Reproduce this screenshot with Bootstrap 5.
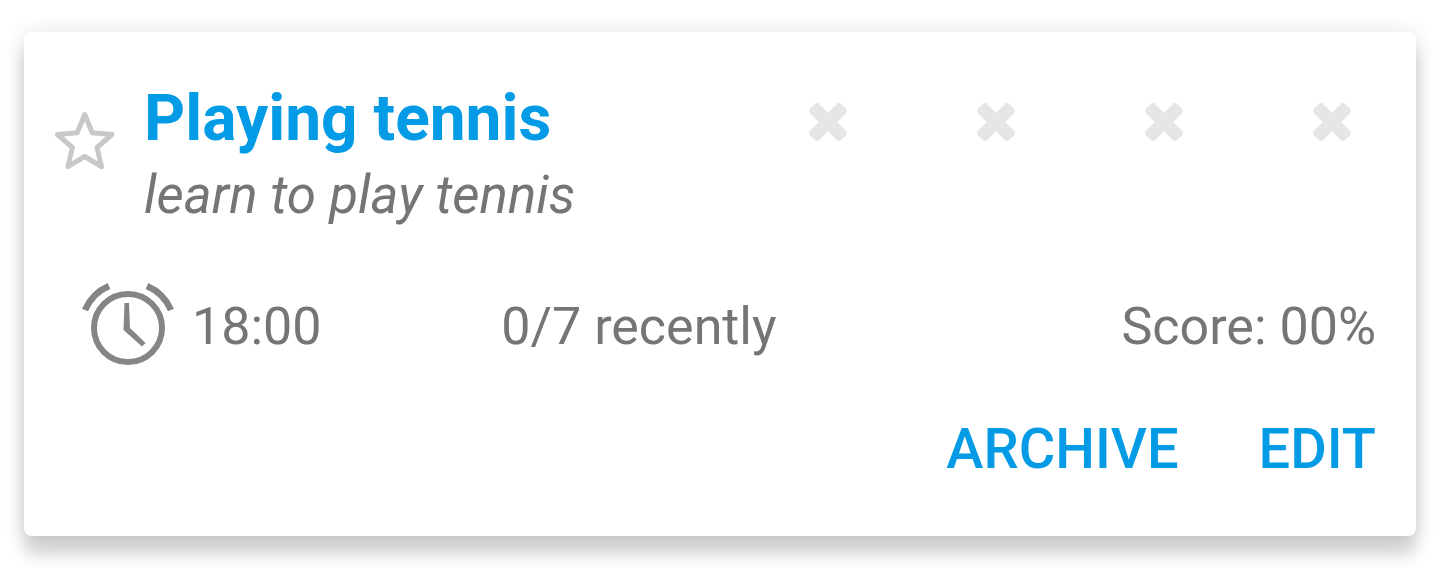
<!DOCTYPE html>
<html lang="en">
<head>
<meta charset="utf-8">
<meta name="viewport" content="width=device-width, initial-scale=1">
<title>Habits</title>
<link href="https://cdn.jsdelivr.net/npm/bootstrap@5.3.0/dist/css/bootstrap.min.css" rel="stylesheet">
<style>
  body { font-family: Roboto, "Liberation Sans", sans-serif; background: #fff; color: #757575; }
  .habit { border-radius: 8px; padding: 49px 0 55px; box-shadow: 0 20px 16px rgba(0,0,0,.14), 0 3px 22px rgba(0,0,0,.14); color: inherit; }
  .habit-head { padding-left: 24px; }
  .habit-star { margin-top: 24px; margin-right: 24px; color: #c8c8c8; }
  .habit-title { font-size: 64px; line-height: 76px; color: #039be5; }
  .habit-text { font-size: 52px; line-height: 60px; }
  .habit-note { font-size: 53px; margin-top: 8px; }
  .habit-marks { width: 672px; color: #e6e6e6; padding-top: 19px; }
  .habit-stats { padding: 0 40px; margin-top: 54px; }
  .habit-time { gap: 16px; padding-left: 16px; color: #757575; }
  .habit-actions { gap: 80px; padding-right: 40px; margin-top: 42px; }
  .habit-action { font-size: 56px; line-height: 64px; color: #039be5; font-weight: 500; }
  .plain-btn { border: 0; padding: 0; background: none; }
  .plain-btn svg, .habit-time svg { display: block; flex: none; }
</style>
</head>
<body>
<svg class="d-none" aria-hidden="true">
  <symbol id="cross" viewBox="-22 -22 44 44">
    <g fill="currentColor">
      <rect x="-22" y="-6.500" width="44" height="13" rx="3.500" transform="rotate(45)"/>
      <rect x="-22" y="-6.500" width="44" height="13" rx="3.500" transform="rotate(-45)"/>
    </g>
  </symbol>
</svg>
<main class="container-fluid px-4 pt-4 pb-4">
  <article class="card habit border-0 my-2">
    <div class="habit-head d-flex align-items-start">
      <button type="button" class="plain-btn habit-star" aria-label="Favourite">
        <svg width="72" height="72" viewBox="0 0 72 72" fill="none" stroke="currentColor" stroke-width="5" stroke-linejoin="round"><path d="M36.700 9.500L44.200 27.800L64 29.500L49 42.500L53.500 61.700L36.700 51.500L19.900 61.700L24.400 42.500L9.400 29.500L29.200 27.800Z"/></svg>
      </button>
      <div class="flex-grow-1">
        <h1 class="habit-title fw-bold mb-0">Playing tennis</h1>
        <p class="habit-text habit-note fst-italic mb-0">learn to play tennis</p>
      </div>
      <div class="habit-marks row row-cols-4 g-0 flex-shrink-0">
        <div class="col d-flex justify-content-center"><button type="button" class="plain-btn text-reset" aria-label="Day 1, not done"><svg width="44" height="44"><use href="#cross"/></svg></button></div>
        <div class="col d-flex justify-content-center"><button type="button" class="plain-btn text-reset" aria-label="Day 2, not done"><svg width="44" height="44"><use href="#cross"/></svg></button></div>
        <div class="col d-flex justify-content-center"><button type="button" class="plain-btn text-reset" aria-label="Day 3, not done"><svg width="44" height="44"><use href="#cross"/></svg></button></div>
        <div class="col d-flex justify-content-center"><button type="button" class="plain-btn text-reset" aria-label="Day 4, not done"><svg width="44" height="44"><use href="#cross"/></svg></button></div>
      </div>
    </div>
    <div class="habit-stats habit-text row g-0 align-items-center">
      <div class="col-4 d-flex align-items-center habit-time">
        <svg width="96" height="96" viewBox="0 0 96 96" fill="none" stroke="#858585" aria-hidden="true">
          <circle cx="48" cy="49" r="34" stroke-width="6"/>
          <path d="M5 31A46 46 0 0 1 29 7M67 7A46 46 0 0 1 91 31" stroke-width="6.500"/>
          <path d="M44.500 24H49L50 49L65.500 64L62 67.500L43.500 51Z" fill="#858585" stroke="none"/>
        </svg>
        <span>18:00</span>
      </div>
      <div class="col-4">0/7 recently</div>
      <div class="col-4 text-end">Score: 00%</div>
    </div>
    <div class="habit-actions d-flex justify-content-end">
      <button type="button" class="plain-btn habit-action">ARCHIVE</button>
      <button type="button" class="plain-btn habit-action">EDIT</button>
    </div>
  </article>
</main>
<script src="https://cdn.jsdelivr.net/npm/bootstrap@5.3.0/dist/js/bootstrap.bundle.min.js"></script>
</body>
</html>
